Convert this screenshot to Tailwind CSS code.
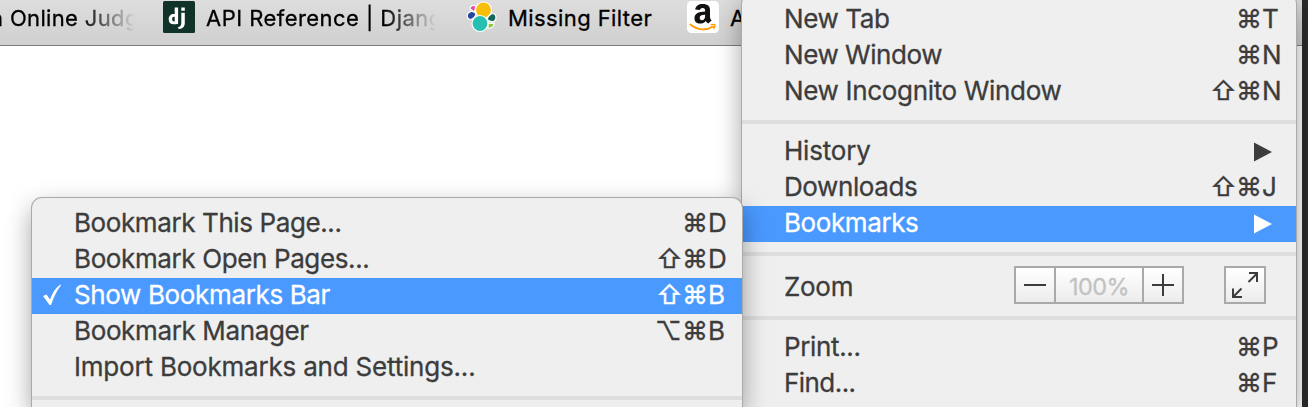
<!DOCTYPE html>
<html lang="en">
<head>
<meta charset="utf-8">
<title>Browser menu</title>
<script src="https://cdn.jsdelivr.net/npm/@tailwindcss/browser@4"></script>
</head>
<body class="relative h-[407px] w-[1308px] overflow-hidden bg-[#2c2b2a] font-['Inter',sans-serif] [-webkit-text-stroke:0.3px_currentColor]">
<div class="h-full w-[1302px] bg-white">
  <div class="flex h-[46px] overflow-hidden border-b border-[#7d7d7d] bg-linear-to-b from-[#dddddd] to-[#d0d0d0] text-[22px] leading-[36px] whitespace-nowrap text-black">
    <div class="w-[163px] shrink-0"><div class="flex w-[135px] overflow-hidden mask-r-from-60% mask-r-to-100%"><span class="-ml-[10px] tracking-[0.35px]">n Online Judge</span></div></div>
    <svg class="mt-px h-8 w-8 shrink-0" viewBox="0 0 32 32"><rect width="32" height="32" rx="1.5" fill="#113228"/><g fill="#fff"><path d="M11.700 6.500h3.400v16.200c-1.700.4-3 .5-4.400.5-3.300 0-5-1.800-5-5 0-3.200 2-5.200 5-5.200.4 0 .7 0 1 .1zm0 9.300c-1.500-.5-2.600.3-2.600 2.300 0 1.900 1 2.700 2.600 2.400z"/><path d="M18.300 6.500h3.500v3.300h-3.500zm0 5.300h3.500v9.400c0 4-.8 5.700-5.800 6.900l-1.500-1.500c3.200-1.300 3.800-2.200 3.800-5.400z"/></g></svg>
    <div class="ml-[11px] w-[230px] shrink-0 overflow-hidden mask-r-from-78% mask-r-to-100%"><span class="tracking-[0.450px]">API Reference | Django</span></div>
    <svg class="ml-[30px] mt-0 h-[34px] w-[32px] shrink-0" viewBox="0 0 32 34" stroke="#fff" stroke-width="1.200"><circle cx="17.500" cy="10" r="8" fill="#f9bf08"/><path d="M4 9c0-3 3-4.500 6-3l-1.500 6z" fill="#ec4c9b"/><path d="M3 12.500c2-1.500 5-1 7 1-.5 3-3 6-6 6-3.500-1-3.700-5-1-7z" fill="#28479c"/><path d="M28 13.500c2.500 2 2.700 5.500.5 7.500-2.500 1.500-5 .5-7.500-1.500 1-3 3.500-6 7-6z" fill="#116858"/><path d="M22 22.500c2 1 4 1 6 .5.500 3-2 5.500-6 5.500z" fill="#8dc63f"/><circle cx="14" cy="23.500" r="8" fill="#28bfb3"/></svg>
    <span class="ml-[10px] w-[179px] shrink-0 tracking-[0.400px]">Missing Filter</span>
    <svg class="mt-px h-8 w-8 shrink-0" viewBox="0 0 32 32"><rect width="32" height="32" rx="4.500" fill="#fff"/><path d="M8.200 8.500c.4-3.500 3.300-5.500 7.500-5.500 5 0 7.300 2.200 7.300 6.200v6.300c0 2 .5 2.600 1.600 4.100l-3.400 2.900c-1-.7-1.800-1.600-2.400-2.600-1.500 1.800-3.400 2.700-5.700 2.700-3.400 0-5.600-2.100-5.600-5.400 0-4.400 3.600-6.400 10.600-6.600V9.700c0-1.800-.7-2.700-2.300-2.700-1.700 0-2.500.8-2.900 2.100zm9.900 5.300c-3.800 0-5.400 1-5.400 3 0 1.500.8 2.400 2.200 2.400 2 0 3.200-1.700 3.200-4.200z" fill="#111"/><path d="M3.500 23.500c7 6.200 16.500 6 22.500 2" fill="none" stroke="#f90" stroke-width="1.900" stroke-linecap="round"/><path d="M23.500 24c2-.7 3.500-.7 4.300-.3.300 1.300-.3 3-1.300 4.300" fill="none" stroke="#f90" stroke-width="1.300"/></svg>
    <span class="ml-[11px]">A</span>
  </div>
</div>

<!-- Main menu -->
<div class="absolute -top-[6px] left-[742px] h-[413px] w-[554px] rounded-t-[10px] bg-[#efefef] pt-2 text-[26px] leading-[33px] whitespace-nowrap text-[#3c3c3c] shadow-[0_0_0_1px_#aaaaaa,0_10px_26px_rgba(0,0,0,0.38)]">
  <div class="flex h-9 justify-between pl-[42px]"><span class="tracking-[-0.400px]">New Tab</span><span class="flex"><span class="w-[26px]">⌘</span><span class="w-[34px]">T</span></span></div>
  <div class="flex h-9 justify-between pl-[42px]"><span class="tracking-[-0.450px]">New Window</span><span class="flex"><span class="w-[26px]">⌘</span><span class="w-[34px]">N</span></span></div>
  <div class="flex h-9 justify-between pl-[42px]"><span class="tracking-[-0.330px]">New Incognito Window</span><span class="flex"><span class="w-[26px]">⇧</span><span class="w-[26px]">⌘</span><span class="w-[34px]">N</span></span></div>
  <div class="my-[10px] h-1 bg-[#dedede]"></div>
  <div class="flex h-9 justify-between pl-[42px]"><span class="tracking-[-0.200px]">History</span><svg class="mt-2 mr-6 h-5 w-[18px]" viewBox="0 0 18 20"><path d="M0 .5 18 10 0 19.500z" fill="#3c3c3c"/></svg></div>
  <div class="flex h-9 justify-between pl-[42px]"><span class="tracking-[-0.400px]">Downloads</span><span class="flex"><span class="w-[26px]">⇧</span><span class="w-[26px]">⌘</span><span class="w-[34px]">J</span></span></div>
  <div class="flex h-9 justify-between bg-[#4a99ff] pl-[42px] text-white"><span class="tracking-[-0.400px]">Bookmarks</span><svg class="mt-2 mr-6 h-5 w-[18px]" viewBox="0 0 18 20"><path d="M0 .5 18 10 0 19.500z" fill="#fff"/></svg></div>
  <div class="my-[10px] h-1 bg-[#dedede]"></div>
  <div class="flex h-10 pl-[42px]"><span class="mt-[4px] w-[230px] tracking-[-0.300px]">Zoom</span>
    <div class="flex h-[38px] w-[170px] border-2 border-[#a9a9a9] bg-linear-to-b from-white to-[#ececec]">
      <svg class="h-[34px] w-[38px]" viewBox="0 0 38 34"><path d="M8 17h22" stroke="#3c3c3c" stroke-width="2"/></svg>
      <span class="w-[90px] border-x-2 border-[#a9a9a9] text-center text-[23.500px] leading-[37px] tracking-[-0.600px] text-[#c2c2c2]">100%</span>
      <svg class="h-[34px] w-[38px]" viewBox="0 0 38 34"><path d="M8 17h22M19 6v22" stroke="#3c3c3c" stroke-width="2"/></svg>
    </div>
    <svg class="ml-10 h-[38px] w-[42px] border-2 border-[#a9a9a9] bg-linear-to-b from-white to-[#ececec]" viewBox="0 0 38 34" fill="none" stroke="#3c3c3c" stroke-width="2"><path d="M22.500 14 31 5.500M23 5h8v9M15.500 20.500 7 29M7 20.500V29h9"/></svg>
  </div>
  <div class="my-[10px] h-1 bg-[#dedede]"></div>
  <div class="flex h-9 justify-between pl-[42px]"><span class="tracking-[-0.350px]">Print...</span><span class="flex"><span class="w-[26px]">⌘</span><span class="w-[34px]">P</span></span></div>
  <div class="flex h-9 justify-between pl-[42px]"><span class="tracking-[-0.550px]">Find...</span><span class="flex"><span class="w-[26px]">⌘</span><span class="w-[34px]">F</span></span></div>
</div>

<!-- Bookmarks submenu -->
<div class="absolute top-[198px] left-[32px] h-[209px] w-[710px] overflow-visible rounded-t-[10px] bg-[#efefef] pt-2 text-[26px] leading-[33px] whitespace-nowrap text-[#3c3c3c] shadow-[0_0_0_1px_#aaaaaa,0_10px_26px_rgba(0,0,0,0.38)]">
  <div class="flex h-9 justify-between pl-[42px]"><span class="tracking-[-0.400px]">Bookmark This Page...</span><span class="flex"><span class="w-[26px]">⌘</span><span class="w-[34px]">D</span></span></div>
  <div class="flex h-9 justify-between pl-[42px]"><span class="tracking-[-0.380px]">Bookmark Open Pages...</span><span class="flex"><span class="w-[26px]">⇧</span><span class="w-[26px]">⌘</span><span class="w-[34px]">D</span></span></div>
  <div class="flex h-9 bg-[#4a99ff] text-white"><svg class="mt-[6px] ml-[11px] h-[22px] w-[31px]" viewBox="0 0 31 22"><path d="M0 12 3.500 10.500 7 15.500C9.500 9 12 4.500 17.500.5L18 1.500C14 6 11 12.500 8 21H6.500z" fill="#fff"/></svg><span class="flex-1 tracking-[-0.360px]">Show Bookmarks Bar</span><span class="flex"><span class="w-[26px]">⇧</span><span class="w-[26px]">⌘</span><span class="w-[34px]">B</span></span></div>
  <div class="flex h-9 justify-between pl-[42px]"><span class="tracking-[-0.360px]">Bookmark Manager</span><span class="flex"><span class="w-[27px]">⌥</span><span class="w-[26px]">⌘</span><span class="w-[34px]">B</span></span></div>
  <div class="flex h-9 pl-[42px]"><span class="tracking-[-0.200px]">Import Bookmarks and Settings...</span></div>
  <div class="mt-[10px] h-1 bg-[#dedede]"></div>
</div>
</body>
</html>
